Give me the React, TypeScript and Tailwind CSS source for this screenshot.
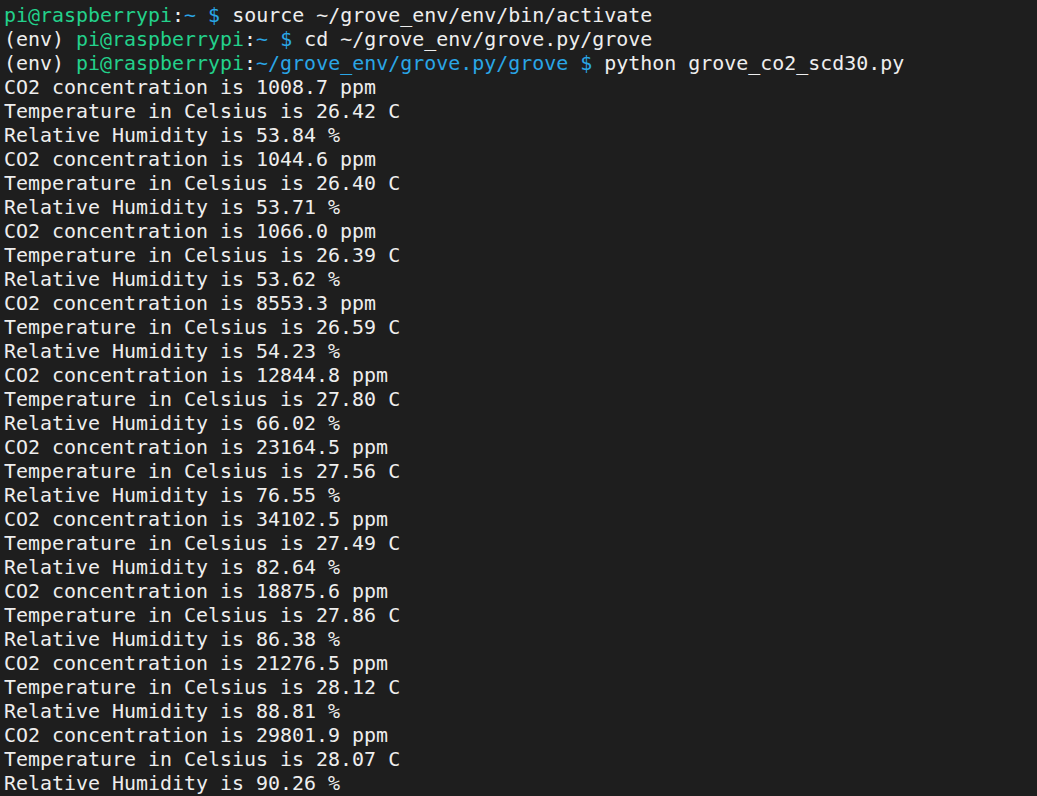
import React from 'react'

type Reading = { co2: string; temp: string; rh: string }

const readings: Reading[] = [
  { co2: '1008.7', temp: '26.42', rh: '53.84' },
  { co2: '1044.6', temp: '26.40', rh: '53.71' },
  { co2: '1066.0', temp: '26.39', rh: '53.62' },
  { co2: '8553.3', temp: '26.59', rh: '54.23' },
  { co2: '12844.8', temp: '27.80', rh: '66.02' },
  { co2: '23164.5', temp: '27.56', rh: '76.55' },
  { co2: '34102.5', temp: '27.49', rh: '82.64' },
  { co2: '18875.6', temp: '27.86', rh: '86.38' },
  { co2: '21276.5', temp: '28.12', rh: '88.81' },
  { co2: '29801.9', temp: '28.07', rh: '90.26' },
]

function Prompt({ env, path }: { env?: boolean; path: string }) {
  return (
    <>
      {env && '(env) '}
      <span className="text-[#23d18b]">pi@raspberrypi</span>
      <span className="text-[#eeeeee]">:</span>
      <span className="text-[#2aa6e6]">{path} $</span>{' '}
    </>
  )
}

export default function App() {
  return (
    <div className="w-[1037px] h-[796px] overflow-hidden bg-[#1e1e1e] px-1 pt-[3px]">
      <pre
        className="text-[19.95px] leading-6 text-[#eeeeee] whitespace-pre"
        style={{ fontFamily: '"DejaVu Sans Mono", "Liberation Mono", monospace' }}
      >
        <div>
          <Prompt path="~" />source ~/grove_env/env/bin/activate
        </div>
        <div>
          <Prompt env path="~" />cd ~/grove_env/grove.py/grove
        </div>
        <div>
          <Prompt env path="~/grove_env/grove.py/grove" />python grove_co2_scd30.py
        </div>
        {readings.map((r, i) => (
          <React.Fragment key={i}>
            <div>CO2 concentration is {r.co2} ppm</div>
            <div>Temperature in Celsius is {r.temp} C</div>
            <div>Relative Humidity is {r.rh} %</div>
          </React.Fragment>
        ))}
      </pre>
    </div>
  )
}
